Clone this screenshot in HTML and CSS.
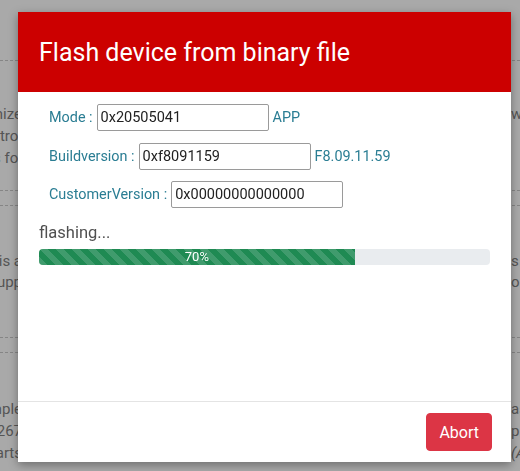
FILE: index.html
```html
<!doctype html>
<html lang="en">

<head>
  <meta charset="utf-8">
  <title>Flash device</title>
  <link rel="stylesheet" href="styles.css">
</head>

<body>
  <div class="page">
    <div class="rule rule-top"></div>
    <div class="lines lines-a">
      <div class="line"><span class="l">Synchronize</span><span class="r">w</span></div>
      <div class="line"><span class="l">Control</span><span class="r"></span></div>
      <div class="line"><span class="l">as fol</span><span class="r"></span></div>
    </div>
    <div class="rule rule-double"></div>
    <div class="lines lines-b">
      <div class="line"><span class="l">This a</span><span class="r">s</span></div>
      <div class="line"><span class="l">supp</span><span class="r">o</span></div>
    </div>
    <div class="rule rule-double rule-c"></div>
    <div class="lines lines-c">
      <div class="line"><span class="l">Example</span><span class="r">as</span></div>
      <div class="line"><span class="l">1267</span><span class="r">p</span></div>
      <div class="line"><span class="l">parts</span><span class="r"><i>(A</i></span></div>
    </div>
  </div>

  <div class="modal">
    <div class="modal-header">
      <h2>Flash device from binary file</h2>
    </div>
    <div class="modal-body">
      <div class="field">
        <label>Mode :</label> <input type="text" value="0x20505041"> <span class="hint">APP</span>
      </div>
      <div class="field">
        <label>Buildversion :</label> <input type="text" value="0xf8091159"> <span class="hint">F8.09.11.59</span>
      </div>
      <div class="field">
        <label>CustomerVersion :</label> <input type="text" value="0x00000000000000">
      </div>

      <p class="status">flashing...</p>
      <div class="progress">
        <div class="progress-bar" style="width:70%">70%</div>
      </div>
    </div>
    <div class="modal-footer">
      <button class="btn-abort">Abort</button>
    </div>
  </div>
</body>

</html>
```

FILE: styles.css
```css
html { background-color:#a9a9a9; }
body { margin:0; font-family:Roboto,"Liberation Sans",sans-serif; color:#555; overflow:hidden; height:471px; }

/* page behind the dialog */
.page { padding-top:60px; font-size:15px; }
.rule { border-top:1px dashed #858585; }
.rule-double { height:14px; border-bottom:1px dashed #858585; margin-top:21px; }
.rule-c { margin-top:44px; }
.lines { line-height:22px; }
.lines-a { margin-top:42px; }
.lines-b { margin-top:45px; line-height:21px; }
.lines-c { margin-top:45px; }
.line { display:flex; justify-content:space-between; white-space:nowrap; }
.line .l { width:22px; overflow:hidden; display:flex; justify-content:flex-end; }
.line .r { width:9px; overflow:hidden; }

/* dialog */
.modal { position:fixed; left:18px; top:12px; width:493px; height:450px; background:#fff; display:flex; flex-direction:column; box-shadow:0 3px 9px rgba(0,0,0,.35); }
.modal-header { background:#cc0000; height:80px; padding:0 21px; display:flex; align-items:center; }
.modal-header h2 { margin:0; color:#fff; font-weight:400; font-size:25px; }
.modal-body { flex:1; padding:12px 21px 0; }
.field { padding-left:10px; height:38.5px; display:flex; align-items:flex-start; gap:4px; font-size:14.4px; color:#2a7d93; }
.field label, .field .hint { line-height:27px; }
.field input { width:172px; height:27px; box-sizing:border-box; border:1px solid #9a9a9a; border-radius:2px; padding:0 3px; font-family:Roboto,"Liberation Sans",sans-serif; font-size:14.5px; color:#222; margin:0; }
.status { margin:3px 0 6px; font-size:16.5px; color:#505050; line-height:20px; }
.progress { height:16px; background:#e9ecef; border-radius:4px; overflow:hidden; }
.progress-bar { height:100%; background-color:#1f8a53; background-image:linear-gradient(45deg,rgba(255,255,255,.15) 25%,transparent 25%,transparent 50%,rgba(255,255,255,.15) 50%,rgba(255,255,255,.15) 75%,transparent 75%,transparent); background-size:16px 16px; color:#fff; font-size:13px; line-height:16px; text-align:center; }
.modal-footer { border-top:1px solid #e4e4e4; padding:11px 19px 11px; display:flex; justify-content:flex-end; }
.btn-abort { background:#dc3545; color:#fff; border:1px solid #dc3545; border-radius:4px; font-family:Roboto,"Liberation Sans",sans-serif; font-size:16px; height:38px; padding:0 12px; }
```
